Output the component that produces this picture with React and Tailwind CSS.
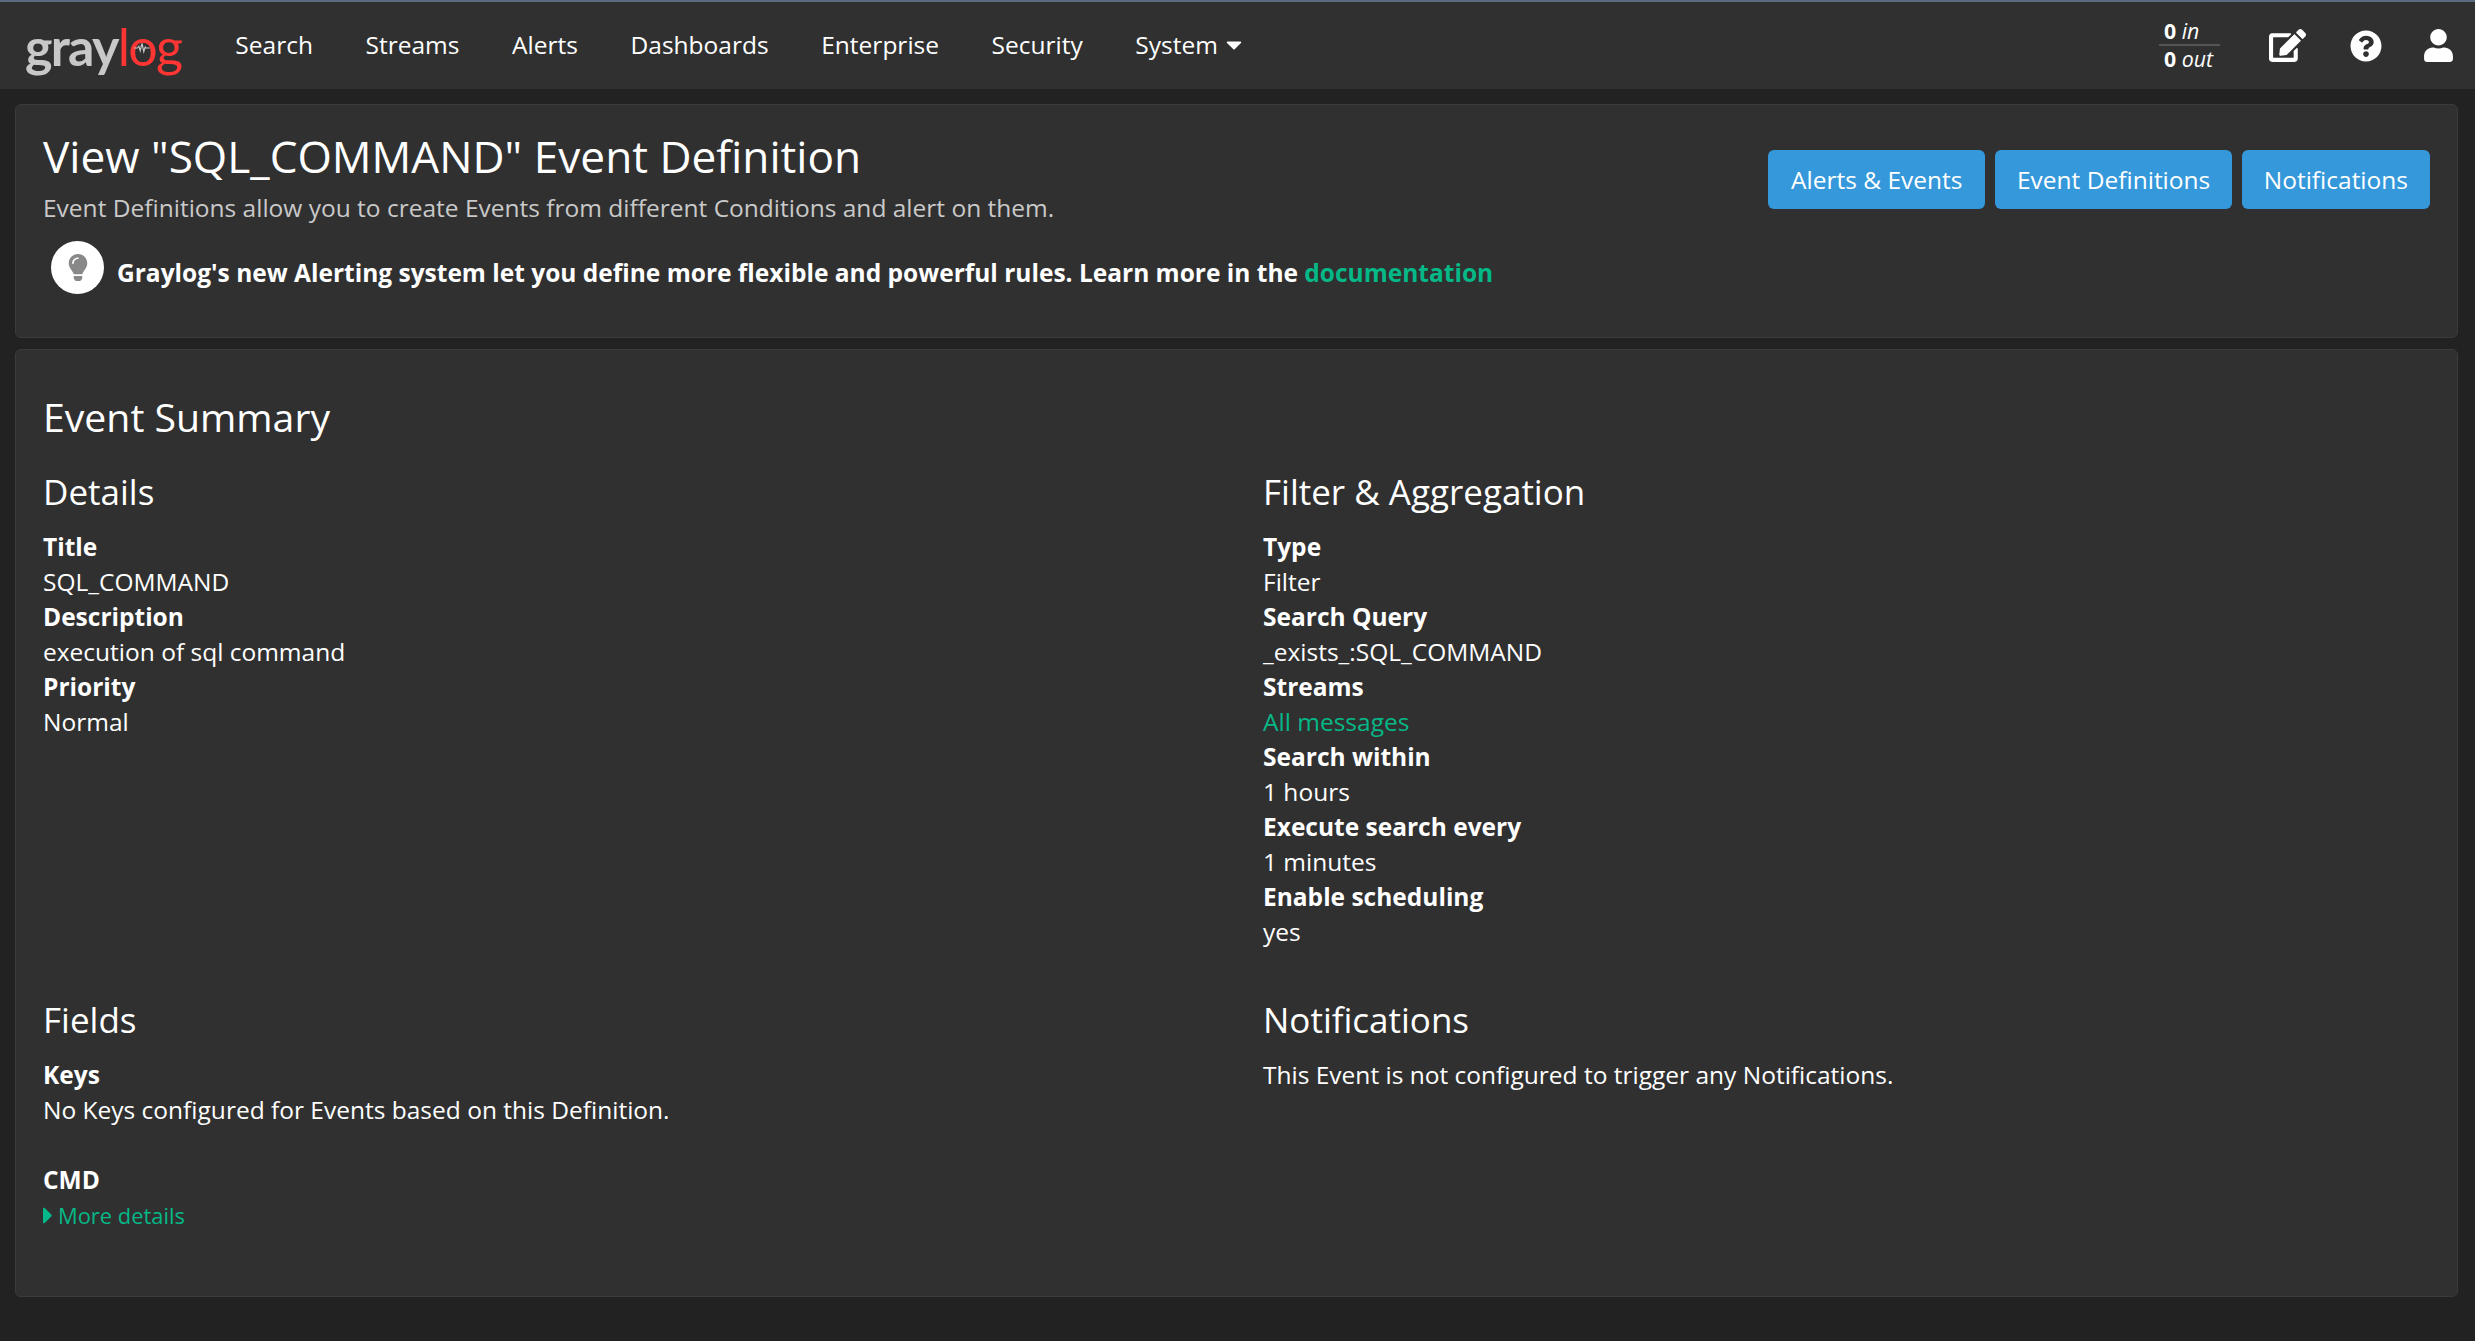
import React from 'react';
import { FaEdit, FaQuestionCircle, FaUser, FaLightbulb, FaCaretRight, FaCaretDown } from 'react-icons/fa';

const navItems = ['Search', 'Streams', 'Alerts', 'Dashboards', 'Enterprise', 'Security'];

const Field = ({ label, children }) => (
  <>
    <div className="font-bold text-white">{label}</div>
    <div className="text-white">{children}</div>
  </>
);

const Logo = () => (
  <div className="flex items-baseline font-['Lato',sans-serif] text-[52px] leading-none tracking-[-1.7px]">
    <span className="font-bold text-[#c8c8c8]">gray</span>
    <span className="relative font-normal text-[#ff3633]">
      log
      <svg viewBox="0 0 20 12" className="absolute left-[15px] top-[22px] w-[18px] h-[12px]" fill="none" stroke="#c8c8c8" strokeWidth="1.3">
        <path d="M1 6h4l1.5-2 1.5 5 2-8 2 9 1.5-5 1 1h4" />
      </svg>
    </span>
  </div>
);

const Navbar = () => (
  <nav className="h-[89px] border-t-2 border-[#5c6b82] bg-[#303030] flex items-center pl-[25px] pr-[22px] text-[24.5px] text-white">
    <Logo />
    <div className="flex items-center ml-[54px] gap-[52.6px] mb-[2px]">
      {navItems.map((item) => (
        <a key={item}>{item}</a>
      ))}
      <a className="flex items-center gap-[8px]">
        System
        <FaCaretDown className="w-[16px] h-[25px]" />
      </a>
    </div>
    <div className="ml-auto flex items-center">
      <div className="w-[61px] text-[21.3px] leading-[26px] mr-[49px] mb-[3px]">
        <div className="pl-[5px] whitespace-nowrap"><b>0</b> <i>in</i></div>
        <div className="border-t-2 border-[#555] pl-[5px] leading-[25px] whitespace-nowrap"><b>0</b> <i>out</i></div>
      </div>
      <FaEdit className="w-[37px] h-[33px] mr-[44px]" />
      <FaQuestionCircle className="w-[32px] h-[32px] mr-[42px]" />
      <FaUser className="w-[29px] h-[33px]" />
    </div>
  </nav>
);

const SectionTitle = ({ children }) => (
  <h3 className="text-[35px] leading-[44px] text-white mb-[15px]">{children}</h3>
);

export default function App() {
  return (
    <div className="min-h-screen bg-[#222222] font-['Open_Sans',sans-serif] text-[24.5px] leading-[35px]">
      <Navbar />
      <main className="pl-[15px] pr-[17px] pt-[15px] pb-[44px]">
        <section className="h-[234px] rounded-[6px] border border-[#3b3b3b] bg-[#303030] pl-[27px] pr-[27px] pt-[21px] flex justify-between">
          <div>
            <h1 className="text-[44.2px] leading-[60px] text-white">View "SQL_COMMAND" Event Definition</h1>
            <p className="text-[#c9c9c9] mt-[3.5px]">Event Definitions allow you to create Events from different Conditions and alert on them.</p>
            <div className="flex items-center mt-[16.5px] ml-[8px]">
              <div className="w-[53px] h-[53px] rounded-full bg-white flex items-center justify-center mr-[13px]">
                <FaLightbulb className="w-[20px] h-[27px] text-[#888]" />
              </div>
              <span className="font-bold text-white mt-[9px]">
                Graylog's new Alerting system let you define more flexible and powerful rules. Learn more in the{' '}
                <a className="text-[#05b887]">documentation</a>
              </span>
            </div>
          </div>
          <div className="flex gap-[9.5px] mt-[24px] items-start">
            <button className="h-[59px] px-[23px] rounded-[6px] bg-[#3498db] text-white">Alerts &amp; Events</button>
            <button className="h-[59px] px-[22px] rounded-[6px] bg-[#3498db] text-white">Event Definitions</button>
            <button className="h-[59px] px-[22px] rounded-[6px] bg-[#3498db] text-white">Notifications</button>
          </div>
        </section>

        <section className="h-[948px] mt-[11px] rounded-[6px] border border-[#3b3b3b] bg-[#303030] pl-[27px] pr-[27px] pt-[40px]">
          <h2 className="text-[39.2px] leading-[54px] text-white mb-[26px]">Event Summary</h2>
          <div className="grid grid-cols-[1220px_1fr] grid-rows-[527.5px_auto]">
            <div>
              <SectionTitle>Details</SectionTitle>
              <Field label="Title">SQL_COMMAND</Field>
              <Field label="Description">execution of sql command</Field>
              <Field label="Priority">Normal</Field>
            </div>
            <div>
              <SectionTitle>Filter &amp; Aggregation</SectionTitle>
              <Field label="Type">Filter</Field>
              <Field label="Search Query">_exists_:SQL_COMMAND</Field>
              <Field label="Streams"><a className="text-[#05b887]">All messages</a></Field>
              <Field label="Search within">1 hours</Field>
              <Field label="Execute search every">1 minutes</Field>
              <Field label="Enable scheduling">yes</Field>
            </div>
            <div>
              <h3 className="text-[35px] leading-[44px] text-white mb-[15.5px]">Fields</h3>
              <Field label="Keys">No Keys configured for Events based on this Definition.</Field>
              <div className="font-bold text-white mt-[35px]">CMD</div>
              <a className="flex items-center text-[#05b887] text-[21.9px] mt-[1px]">
                <FaCaretRight className="w-[10px] h-[27px] mr-[5px]" />
                More details
              </a>
            </div>
            <div>
              <h3 className="text-[35px] leading-[44px] text-white mb-[15.5px]">Notifications</h3>
              <div className="text-white">This Event is not configured to trigger any Notifications.</div>
            </div>
          </div>
        </section>
      </main>
    </div>
  );
}
